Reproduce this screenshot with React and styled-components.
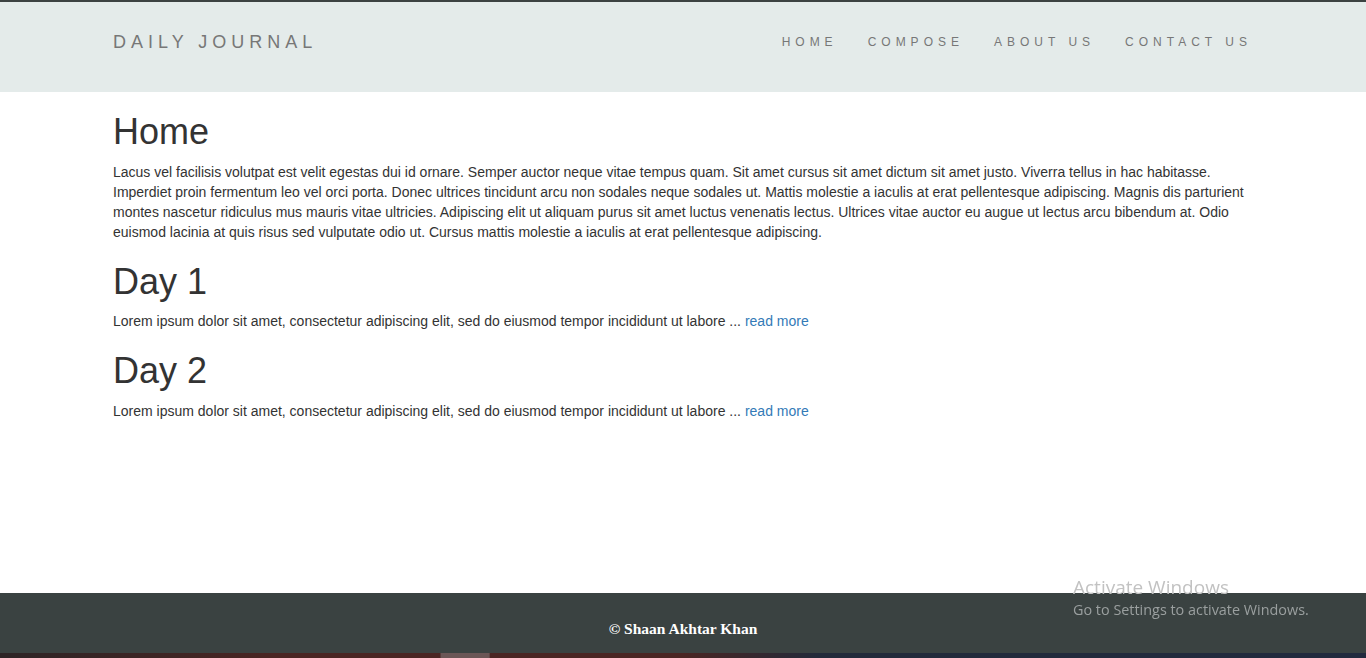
import React from "react";
import styled, { createGlobalStyle } from "styled-components";

const GlobalStyle = createGlobalStyle`
  html, body {
    margin: 0;
    padding: 0;
    background: #fff;
  }
  body {
    font-family: "Liberation Sans", Arial, Helvetica, sans-serif;
    font-size: 14px;
    line-height: 20px;
    color: #333;
    border-top: 2px solid #3c4242;
    min-height: 656px;
  }
`;

const Navbar = styled.nav`
  background-color: #e4ebea;
  height: 90px;
`;

const Container = styled.div`
  width: 1170px;
  margin: 0 auto;
  padding: 0 15px;
  box-sizing: border-box;
`;

const NavInner = styled(Container)`
  display: flex;
  align-items: center;
  justify-content: space-between;
  height: 100%;
`;

const Brand = styled.a`
  font-size: 18px;
  letter-spacing: 5px;
  color: #777;
  text-decoration: none;
  padding-bottom: 10px;
`;

const NavList = styled.ul`
  display: flex;
  list-style: none;
  margin: 0 1px 0 0;
  padding: 0 0 11px;
  gap: 30px;
`;

const NavLink = styled.a`
  font-size: 12px;
  letter-spacing: 5px;
  white-space: nowrap;
  color: #777;
  text-decoration: none;
`;

const Main = styled(Container)`
  padding-top: 20px;
`;

const Heading = styled.h1`
  font-size: 36px;
  font-weight: 500;
  line-height: 1.1;
  margin: 20px 0 10px;
  &:first-child {
    margin-top: 0;
  }
`;

const Para = styled.p`
  margin: 0 0 10px;
`;

const ReadMore = styled.a`
  color: #337ab7;
  text-decoration: none;
`;

const Footer = styled.footer`
  position: fixed;
  left: 0;
  right: 0;
  bottom: 5px;
  height: 60px;
  background-color: #3a4241;
  display: flex;
  align-items: center;
  justify-content: center;
`;

const FooterText = styled.p`
  margin: 0;
  padding-top: 12px;
  font-family: "Liberation Serif", "Times New Roman", serif;
  font-size: 15.5px;
  font-weight: bold;
  color: #fff;
`;

const Taskbar = styled.div`
  position: fixed;
  left: 0;
  right: 0;
  bottom: 0;
  height: 5px;
  background: linear-gradient(
    to right,
    #2e2426 0%,
    #4a2523 20%,
    #4a2523 32.2%,
    #6b5656 32.3%,
    #6b5656 35.8%,
    #4a2523 35.9%,
    #4a2523 50%,
    #232a3a 60%,
    #222a3e 100%
  );
`;

const Watermark = styled.div`
  position: fixed;
  left: 1073px;
  top: 574px;
  z-index: 10;
  font-family: "Open Sans", "Noto Sans", sans-serif;
  pointer-events: none;
`;

const WatermarkTitle = styled.div`
  font-size: 19px;
  line-height: 26px;
  color: #c2c2c2;
`;

const WatermarkSub = styled.div`
  font-size: 14.4px;
  line-height: 20px;
  color: #9a9f9f;
`;

const posts = [
  {
    title: "Day 1",
    body: "Lorem ipsum dolor sit amet, consectetur adipiscing elit, sed do eiusmod tempor incididunt ut labore",
  },
  {
    title: "Day 2",
    body: "Lorem ipsum dolor sit amet, consectetur adipiscing elit, sed do eiusmod tempor incididunt ut labore",
  },
];

const App = () => {
  return (
    <>
      <GlobalStyle />
      <Navbar>
        <NavInner>
          <Brand href="#">DAILY JOURNAL</Brand>
          <NavList>
            <li><NavLink href="#">HOME</NavLink></li>
            <li><NavLink href="#">COMPOSE</NavLink></li>
            <li><NavLink href="#">ABOUT US</NavLink></li>
            <li><NavLink href="#">CONTACT US</NavLink></li>
          </NavList>
        </NavInner>
      </Navbar>
      <Main>
        <Heading>Home</Heading>
        <Para>
          Lacus vel facilisis volutpat est velit egestas dui id ornare. Semper auctor neque vitae tempus quam. Sit amet cursus sit amet dictum sit amet justo. Viverra tellus in hac habitasse. Imperdiet proin fermentum leo vel orci porta. Donec ultrices tincidunt arcu non sodales neque sodales ut. Mattis molestie a iaculis at erat pellentesque adipiscing. Magnis dis parturient montes nascetur ridiculus mus mauris vitae ultricies. Adipiscing elit ut aliquam purus sit amet luctus venenatis lectus. Ultrices vitae auctor eu augue ut lectus arcu bibendum at. Odio euismod lacinia at quis risus sed vulputate odio ut. Cursus mattis molestie a iaculis at erat pellentesque adipiscing.
        </Para>
        {posts.map((post) => (
          <React.Fragment key={post.title}>
            <Heading>{post.title}</Heading>
            <Para>
              {post.body} ... <ReadMore href="#">read more</ReadMore>
            </Para>
          </React.Fragment>
        ))}
      </Main>
      <Footer>
        <FooterText>© Shaan Akhtar Khan</FooterText>
      </Footer>
      <Watermark>
        <WatermarkTitle>Activate Windows</WatermarkTitle>
        <WatermarkSub>Go to Settings to activate Windows.</WatermarkSub>
      </Watermark>
      <Taskbar />
    </>
  );
};

export default App;
